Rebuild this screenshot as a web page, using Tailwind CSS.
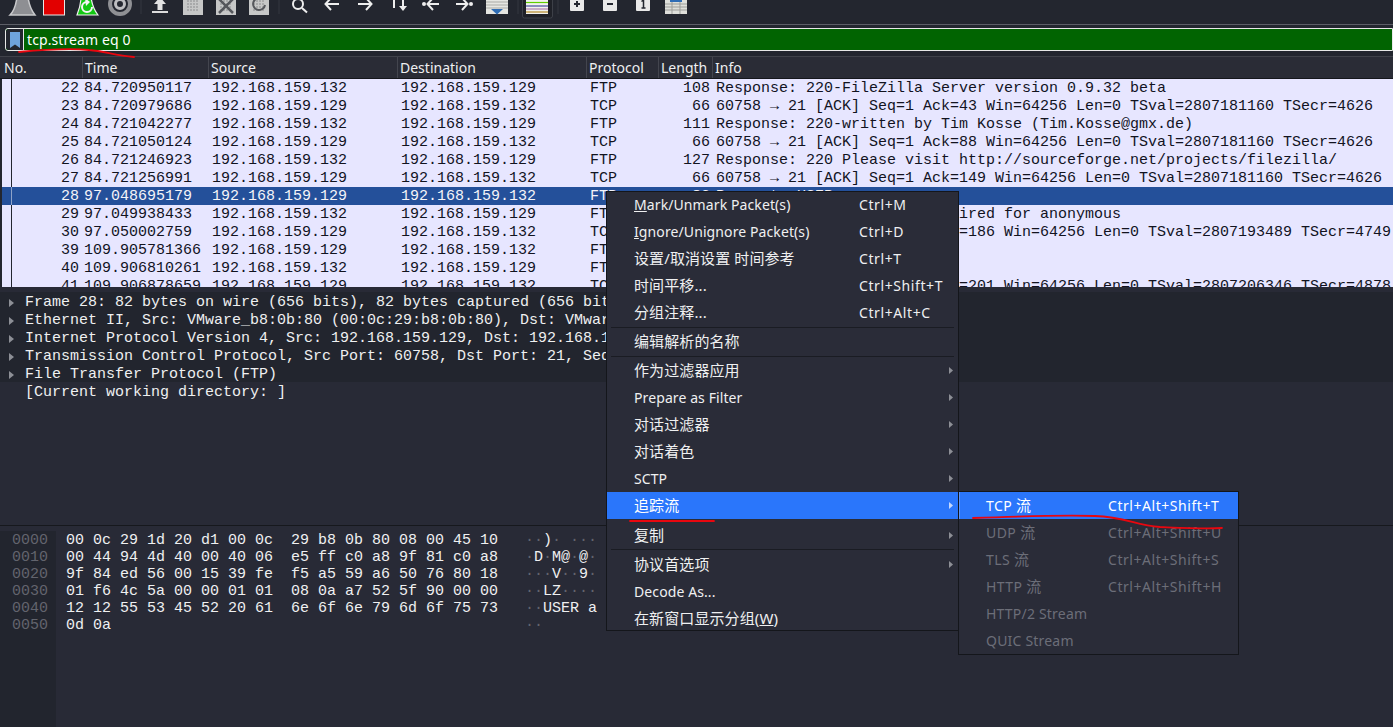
<!DOCTYPE html>
<html lang="en">
<head>
<meta charset="UTF-8">
<title>Wireshark</title>
<script src="https://cdn.jsdelivr.net/npm/@tailwindcss/browser@4"></script>
</head>
<body class="bg-[#282a36] overflow-hidden">
<div class="relative w-[1393px] h-[727px] overflow-hidden flex flex-col bg-[#282a36] text-[#eff0f1] text-[14px] font-['Noto_Sans','Noto_Sans_CJK_SC',sans-serif]">

  <!-- toolbar -->
  <div class="h-[24px] shrink-0 bg-[#23262f]">
    <svg width="1393" height="24" viewBox="0 0 1393 24">
      <path d="M141 0V14M279 0V14M518 0V14M558 0V14" stroke="#343741"/>
      <path d="M17 -3C16 5 14 11 10 15H35C31 10 29 5 28 -3Z" fill="#8e8f93" stroke="#c9cacc" stroke-width="1.5"/>
      <rect x="43.5" y="-3" width="21" height="18" fill="#e20000" stroke="#e8e8e8"/>
      <path d="M81 -3C81 5 79 10 77 15H98C94 10 92 5 91 -3Z" fill="#12c812" stroke="#f2f2f2" stroke-width="1.2"/>
      <path d="M92 7A5 5 0 1 1 87 2" fill="none" stroke="#f4f4f4" stroke-width="2"/>
      <path d="M85 -2L90 2L86 6Z" fill="#f4f4f4"/>
      <circle cx="120" cy="4" r="10" fill="none" stroke="#8f9094" stroke-width="4"/>
      <circle cx="120" cy="4" r="4.500" fill="none" stroke="#bdbdc0" stroke-width="3"/>
      <path d="M160 -3L166 4H162.500V10H157.500V4H154Z" fill="#e2e2e2"/>
      <rect x="152" y="11" width="16" height="2" fill="#dcdcdc"/>
      <g fill="#c6c7c7">
        <rect x="183" y="-2" width="20" height="17"/>
        <rect x="216" y="-2" width="20" height="17"/>
        <rect x="249" y="-2" width="20" height="17"/>
      </g>
      <g stroke="#8b8c8e" stroke-dasharray="2 1" stroke-width="1">
        <path d="M187 1H199M187 4H199M187 7H199M187 10H199"/>
        <path d="M220 1H232M220 4H232M220 7H232M220 10H232"/>
        <path d="M253 1H265M253 4H265M253 7H265M253 10H265"/>
      </g>
      <path d="M219 -1L233 13M233 -1L219 13" stroke="#55575c" stroke-width="2.500"/>
      <path d="M265 5A6 6 0 1 1 259 -2" fill="none" stroke="#55575c" stroke-width="2"/>
      <g fill="none" stroke="#eeeeee" stroke-width="2">
        <circle cx="298" cy="4" r="5"/>
        <path d="M302 8L307 12.500"/>
        <path d="M339 4H326M331 -2L325.500 4L331 10"/>
        <path d="M358 4H371M366 -2L371.500 4L366 10"/>
        <path d="M394 -2V8M403 -2V8"/>
        <path d="M439 4H428M433 -2L427.500 4L433 10"/>
        <path d="M456 4H467M462 -2L467.500 4L462 10"/>
      </g>
      <path d="M399 6L403 11L407 6Z" fill="#eeeeee"/>
      <circle cx="424" cy="4" r="2" fill="#eeeeee"/>
      <circle cx="471" cy="4" r="2" fill="#eeeeee"/>
      <rect x="486" y="-2" width="22" height="16" fill="#e5e6e2"/>
      <path d="M486 2H508M486 5H508M486 8H508" stroke="#a9aaa6"/>
      <path d="M491 9H503L497 14.500Z" fill="#2f6db5"/>
      <rect x="522.500" y="-3" width="30" height="21" rx="2" fill="#1f2128" stroke="#3d4048"/>
      <rect x="526" y="-2" width="22" height="16" fill="#f2f2ee"/>
      <path d="M526 2.500H548" stroke="#5fd000" stroke-width="1.200"/>
      <path d="M526 6H548" stroke="#444a9c" stroke-width="1.200"/>
      <path d="M526 9H548" stroke="#a06aa0" stroke-width="1"/>
      <path d="M526 12H548" stroke="#b58a2a" stroke-width="1.200"/>
      <g fill="#e9e9e9">
        <rect x="570" y="-3" width="14" height="14" rx="1"/>
        <rect x="603" y="-3" width="14" height="14" rx="1"/>
        <rect x="636" y="-3" width="14" height="14" rx="1"/>
      </g>
      <path d="M577 1V7M574 4H580M607 4H613" stroke="#23262f" stroke-width="2"/>
      <path d="M641.500 1.500L643.500 0V8M641.500 8H645.500" stroke="#23262f" stroke-width="1.500" fill="none"/>
      <rect x="665" y="-2" width="22" height="16" fill="#dedfda"/>
      <path d="M665 4H687M665 7H687M665 10H687M672 -2V14M680 -2V14" stroke="#9c9d99"/>
      <rect x="670" y="-2" width="12" height="4" fill="#2f6db5"/>
    </svg>
  </div>
  <div class="h-px shrink-0 bg-[#5c5e66]"></div>

  <!-- display filter -->
  <div class="h-[31px] shrink-0 bg-[#23262f] pl-[5px] pt-[3px]">
    <div class="flex h-[23px] w-[1388px] border border-[#e8e8e8] rounded-l-[3px] bg-[#016401]">
      <div class="w-[18px] shrink-0 bg-[#23262f] border-r border-[#e8e8e8] rounded-l-[3px] flex justify-center pt-[3px]">
        <svg width="10" height="16" viewBox="0 0 10 16"><path d="M0 0H10V16L5 12.500L0 16Z" fill="#6ea3dc"/></svg>
      </div>
      <div class="pl-[3px] leading-[21px] text-white text-[14px] tracking-[0.1px]">tcp.stream eq 0</div>
    </div>
  </div>

  <!-- packet list -->
  <div class="h-[231px] shrink-0 overflow-hidden">
    <div class="h-[23px] border-t border-[#3f4149] border-b border-b-[#15171c] bg-[#2a2c36] grid grid-cols-[82px_126px_189px_189px_72px_54px_1fr] leading-[21px] text-[14px] text-[#eff0f1]">
      <div class="pl-[4px]">No.</div>
      <div class="pl-[2px] border-l border-[#43454e]">Time</div>
      <div class="pl-[2px] border-l border-[#43454e]">Source</div>
      <div class="pl-[2px] border-l border-[#43454e]">Destination</div>
      <div class="pl-[2px] border-l border-[#43454e]">Protocol</div>
      <div class="pl-[2px] border-l border-[#43454e]">Length</div>
      <div class="pl-[2px] border-l border-[#43454e]">Info</div>
    </div>
    <div id="rows" class="relative font-['Liberation_Mono',monospace] text-[15px]"></div>
  </div>

  <div class="h-[5px] shrink-0 bg-[#282a36]"></div>

  <!-- packet details -->
  <div class="h-[228px] shrink-0 font-['Liberation_Mono',monospace] text-[15px] leading-[18px] overflow-hidden">
    <div class="bg-[#22252e]">
      <div class="flex h-[18px] pt-[4px] items-center pl-[9px] whitespace-pre"><svg class="mr-[11px]" width="5" height="8" viewBox="0 0 5 8"><path d="M0 0L5 4L0 8Z" fill="#8d8f96"/></svg>Frame 28: 82 bytes on wire (656 bits), 82 bytes captured (656 bits) on interface eth0</div>
      <div class="flex h-[18px] pt-[4px] items-center pl-[9px] whitespace-pre"><svg class="mr-[11px]" width="5" height="8" viewBox="0 0 5 8"><path d="M0 0L5 4L0 8Z" fill="#8d8f96"/></svg>Ethernet II, Src: VMware_b8:0b:80 (00:0c:29:b8:0b:80), Dst: VMware_1d:20:d1 (00:0c:29:1d:20:d1)</div>
      <div class="flex h-[18px] pt-[4px] items-center pl-[9px] whitespace-pre"><svg class="mr-[11px]" width="5" height="8" viewBox="0 0 5 8"><path d="M0 0L5 4L0 8Z" fill="#8d8f96"/></svg>Internet Protocol Version 4, Src: 192.168.159.129, Dst: 192.168.159.132</div>
      <div class="flex h-[18px] pt-[4px] items-center pl-[9px] whitespace-pre"><svg class="mr-[11px]" width="5" height="8" viewBox="0 0 5 8"><path d="M0 0L5 4L0 8Z" fill="#8d8f96"/></svg>Transmission Control Protocol, Src Port: 60758, Dst Port: 21, Seq: 1, Ack: 149, Len: 16</div>
      <div class="flex h-[18px] pt-[4px] items-center pl-[9px] whitespace-pre"><svg class="mr-[11px]" width="5" height="8" viewBox="0 0 5 8"><path d="M0 0L5 4L0 8Z" fill="#8d8f96"/></svg>File Transfer Protocol (FTP)</div>
    </div>
    <div class="h-[18px] pt-[2px] pl-[25px]">[Current working directory: ]</div>
  </div>

  <div class="h-[11px] shrink-0 flex flex-col justify-center"><div class="h-px bg-[#16181d]"></div></div>

  <!-- packet bytes -->
  <div class="flex-1 flex font-['Liberation_Mono',monospace] text-[15px] leading-[17px] whitespace-pre">
    <div class="w-[56px] shrink-0 pl-[12px] pt-px bg-[#22252e] text-[#62646d]">0000<br>0010<br>0020<br>0030<br>0040<br>0050</div>
    <div class="w-[469px] shrink-0 pl-[10px] pt-px">00 0c 29 1d 20 d1 00 0c  29 b8 0b 80 08 00 45 10<br>00 44 94 4d 40 00 40 06  e5 ff c0 a8 9f 81 c0 a8<br>9f 84 ed 56 00 15 39 fe  f5 a5 59 a6 50 76 80 18<br>01 f6 4c 5a 00 00 01 01  08 0a a7 52 5f 90 00 00<br>12 12 55 53 45 52 20 61  6e 6f 6e 79 6d 6f 75 73<br>0d 0a</div>
    <div class="pt-px"><span class="text-[#62646d]">··</span>)<span class="text-[#62646d]">·</span> <span class="text-[#62646d]">···</span><br><span class="text-[#62646d]">·</span>D<span class="text-[#62646d]">·</span>M@<span class="text-[#62646d]">·</span>@<span class="text-[#62646d]">·</span><br><span class="text-[#62646d]">···</span>V<span class="text-[#62646d]">··</span>9<span class="text-[#62646d]">·</span><br><span class="text-[#62646d]">··</span>LZ<span class="text-[#62646d]">····</span><br><span class="text-[#62646d]">··</span>USER a<br><span class="text-[#62646d]">··</span></div>
  </div>

  <!-- context menu -->
  <div class="absolute left-[606px] top-[191px] w-[353px] border border-[#14161b] bg-[#2a2c38] text-[14px] leading-[27px] tracking-[0.1px]">
    <div class="h-[26px] leading-[26px] pl-[27px] flex"><span class="w-[225px]"><span class="underline">M</span>ark/Unmark Packet(s)</span><span class="tracking-[0.6px]">Ctrl+M</span></div>
    <div class="h-[27px] pl-[27px] flex"><span class="w-[225px]"><span class="underline">I</span>gnore/Unignore Packet(s)</span><span class="tracking-[0.6px]">Ctrl+D</span></div>
    <div class="h-[27px] pl-[27px] flex"><span class="w-[225px] text-[15px]">设置/取消设置 时间参考</span><span class="tracking-[0.6px]">Ctrl+T</span></div>
    <div class="h-[27px] pl-[27px] flex"><span class="w-[225px] text-[15px]">时间平移...</span><span class="tracking-[0.6px]">Ctrl+Shift+T</span></div>
    <div class="h-[27px] pl-[27px] flex"><span class="w-[225px] text-[15px]">分组注释...</span><span class="tracking-[0.6px]">Ctrl+Alt+C</span></div>
    <div class="h-[2px] px-[4px] pt-px"><div class="h-px bg-[#1a1c23]"></div></div>
    <div class="h-[27px] pl-[27px] text-[15px]">编辑解析的名称</div>
    <div class="h-[2px] px-[4px] pt-px"><div class="h-px bg-[#1a1c23]"></div></div>
    <div class="h-[27px] pl-[27px] flex items-center justify-between pr-[5px]"><span class="text-[15px]">作为过滤器应用</span><svg width="4" height="7" viewBox="0 0 4 7"><path d="M0 0L4 3.500L0 7Z" fill="#8d8f96"/></svg></div>
    <div class="h-[27px] pl-[27px] flex items-center justify-between pr-[5px]"><span>Prepare as Filter</span><svg width="4" height="7" viewBox="0 0 4 7"><path d="M0 0L4 3.500L0 7Z" fill="#8d8f96"/></svg></div>
    <div class="h-[27px] pl-[27px] flex items-center justify-between pr-[5px]"><span class="text-[15px]">对话过滤器</span><svg width="4" height="7" viewBox="0 0 4 7"><path d="M0 0L4 3.500L0 7Z" fill="#8d8f96"/></svg></div>
    <div class="h-[27px] pl-[27px] flex items-center justify-between pr-[5px]"><span class="text-[15px]">对话着色</span><svg width="4" height="7" viewBox="0 0 4 7"><path d="M0 0L4 3.500L0 7Z" fill="#8d8f96"/></svg></div>
    <div class="h-[27px] pl-[27px] flex items-center justify-between pr-[5px]"><span>SCTP</span><svg width="4" height="7" viewBox="0 0 4 7"><path d="M0 0L4 3.500L0 7Z" fill="#8d8f96"/></svg></div>
    <div class="h-[27px] pl-[27px] flex items-center justify-between pr-[5px] bg-[#2a76fb] text-white"><span class="text-[15px]">追踪流</span><svg width="4" height="7" viewBox="0 0 4 7"><path d="M0 0L4 3.500L0 7Z" fill="#c5d8fb"/></svg></div>
    <div class="h-[27px] mt-[3px] pl-[27px] flex items-center justify-between pr-[5px]"><span class="text-[15px]">复制</span><svg width="4" height="7" viewBox="0 0 4 7"><path d="M0 0L4 3.500L0 7Z" fill="#8d8f96"/></svg></div>
    <div class="h-[2px] px-[4px]"><div class="h-px bg-[#1a1c23]"></div></div>
    <div class="h-[27px] pl-[27px] flex items-center justify-between pr-[5px]"><span class="text-[15px]">协议首选项</span><svg width="4" height="7" viewBox="0 0 4 7"><path d="M0 0L4 3.500L0 7Z" fill="#8d8f96"/></svg></div>
    <div class="h-[27px] pl-[27px]">Decode As...</div>
    <div class="h-[25px] pl-[27px] text-[15px]">在新窗口显示分组(<span class="underline">W</span>)</div>
  </div>

  <!-- follow stream submenu -->
  <div class="absolute left-[958px] top-[491px] w-[281px] border border-[#14161b] bg-[#2a2c38] text-[14px] leading-[27px] text-[#6c6e78]">
    <div class="h-[27px] pl-[26px] flex bg-[#2a76fb] text-white border-l border-[#5b95fc]"><span class="w-[122px] tracking-[0.4px]">TCP <span class="text-[15px]">流</span></span><span class="tracking-[0.55px]">Ctrl+Alt+Shift+T</span></div>
    <div class="h-[27px] pl-[27px] flex"><span class="w-[122px] tracking-[0.4px]">UDP <span class="text-[15px]">流</span></span><span class="tracking-[0.55px]">Ctrl+Alt+Shift+U</span></div>
    <div class="h-[27px] pl-[27px] flex"><span class="w-[122px] tracking-[0.4px]">TLS <span class="text-[15px]">流</span></span><span class="tracking-[0.55px]">Ctrl+Alt+Shift+S</span></div>
    <div class="h-[27px] pl-[27px] flex"><span class="w-[122px] tracking-[0.4px]">HTTP <span class="text-[15px]">流</span></span><span class="tracking-[0.55px]">Ctrl+Alt+Shift+H</span></div>
    <div class="h-[27px] pl-[27px] tracking-[0.2px]">HTTP/2 Stream</div>
    <div class="h-[27px] pl-[27px] tracking-[0.2px]">QUIC Stream</div>
  </div>

  <!-- red pen marks drawn on the screenshot -->
  <svg class="absolute left-0 top-0 pointer-events-none" width="1393" height="727" viewBox="0 0 1393 727" fill="none" stroke="#e8070f" stroke-width="1.800" stroke-linecap="round">
    <path d="M19 52C40 50 70 48 89 50C105 51 115 56 134 57"/>
    <path d="M630 521H714"/>
    <path d="M973 518C1000 517 1060 515 1095 516C1125 517 1135 525 1160 527C1185 528 1205 529 1222 528"/>
  </svg>
</div>

<script>
  const a = "192.168.159.132";
  const b = "192.168.159.129";
  const ack = "60758 → 21 [ACK] ";
  const packets = [
    [22, "84.720950117", a, b, "FTP", 108, "Response: 220-FileZilla Server version 0.9.32 beta"],
    [23, "84.720979686", b, a, "TCP", 66, ack + "Seq=1 Ack=43 Win=64256 Len=0 TSval=2807181160 TSecr=4626"],
    [24, "84.721042277", a, b, "FTP", 111, "Response: 220-written by Tim Kosse (Tim.Kosse@gmx.de)"],
    [25, "84.721050124", b, a, "TCP", 66, ack + "Seq=1 Ack=88 Win=64256 Len=0 TSval=2807181160 TSecr=4626"],
    [26, "84.721246923", a, b, "FTP", 127, "Response: 220 Please visit http://sourceforge.net/projects/filezilla/"],
    [27, "84.721256991", b, a, "TCP", 66, ack + "Seq=1 Ack=149 Win=64256 Len=0 TSval=2807181160 TSecr=4626"],
    [28, "97.048695179", b, a, "FTP", 82, "Request: USER anonymous"],
    [29, "97.049938433", a, b, "FTP", 100, "Response: 331 Password required for anonymous"],
    [30, "97.050002759", b, a, "TCP", 66, ack + "Seq=17 Ack=186 Win=64256 Len=0 TSval=2807193489 TSecr=4749"],
    [39, "109.905781366", b, a, "FTP", 79, "Request: PASS"],
    [40, "109.906810261", a, b, "FTP", 81, "Response: 230 Logged on"],
    [41, "109.906878659", b, a, "TCP", 66, ack + "Seq=26 Ack=201 Win=64256 Len=0 TSval=2807206346 TSecr=4878"],
  ];

  const rows = document.querySelector("#rows");
  packets.forEach((p) => {
    const row = document.createElement("div");
    const selected = p[0] === 28;
    row.className = selected
      ? "h-[18px] pt-px leading-[18px] grid grid-cols-[82px_126px_189px_189px_72px_54px_1fr] whitespace-pre bg-[#24509a] text-[#f4f4f8]"
      : "h-[18px] pt-px leading-[18px] grid grid-cols-[82px_126px_189px_189px_72px_54px_1fr] whitespace-pre bg-[#e7e6ff] text-[#12131f]";
    row.innerHTML =
      `<div class="text-right pr-[3px]">${p[0]}</div>` +
      `<div class="pl-[2px]">${p[1]}</div>` +
      `<div class="pl-[4px]">${p[2]}</div>` +
      `<div class="pl-[4px]">${p[3]}</div>` +
      `<div class="pl-[4px]">${p[4]}</div>` +
      `<div class="text-right pr-[2px]">${p[5]}</div>` +
      `<div class="pl-[4px]">${p[6]}</div>`;
    rows.appendChild(row);
  });

  const edge = document.createElement("div");
  edge.className = "absolute left-0 top-0 h-[234px] w-[2px] bg-[#23262f]";
  rows.appendChild(edge);
  const bracket = document.createElement("div");
  bracket.className = "absolute left-[11px] top-0 h-[234px] w-px bg-[#23262f]";
  rows.appendChild(bracket);
  const bracketSel = document.createElement("div");
  bracketSel.className = "absolute left-[11px] top-[108px] h-[18px] w-px bg-[#8ea3c9]";
  rows.appendChild(bracketSel);
</script>
</body>
</html>
